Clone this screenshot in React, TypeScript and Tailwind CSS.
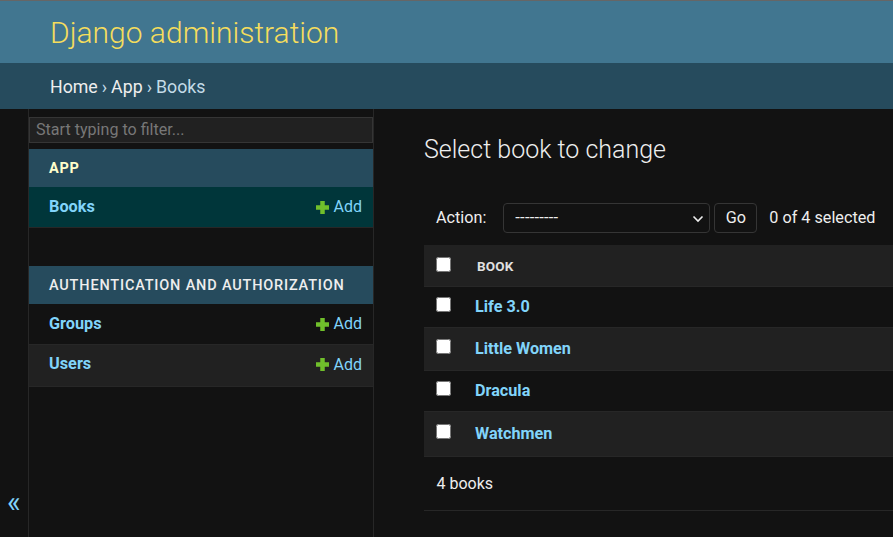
const font = { fontFamily: "Roboto, 'Liberation Sans', sans-serif" };

function PlusIcon() {
  return (
    <svg width="13" height="13" viewBox="0 0 13 13" className="mr-[5px] -ml-px">
      <path d="M4.25 0h4.5v4.25H13v4.5H8.75V13h-4.5V8.75H0v-4.5h4.25z" fill="#70bf2b" />
    </svg>
  );
}

function ModelRow({ name, rowClass }: { name: string; rowClass: string }) {
  return (
    <div className={`flex items-center justify-between border-b border-[#272727] pl-5 pr-[11px] ${rowClass}`}>
      <a className="text-[16.3px] font-bold text-[#81d4fa]">{name}</a>
      <a className="flex items-center text-[16px] text-[#81d4fa]">
        <PlusIcon />
        Add
      </a>
    </div>
  );
}

function BookRow({ title, rowClass, checkClass, textClass }: { title: string; rowClass: string; checkClass: string; textClass: string }) {
  return (
    <div className={`flex border-b border-[#272727] ${rowClass}`}>
      <input type="checkbox" className={`ml-[12px] h-[15px] w-[15px] ${checkClass}`} />
      <a className={`ml-[24px] text-[16.2px] leading-[24px] font-bold text-[#81d4fa] ${textClass}`}>{title}</a>
    </div>
  );
}

export default function App() {
  return (
    <div style={font} className="flex h-[537px] w-[893px] flex-col overflow-hidden bg-[#121212] text-[#eeeeee]">
      <header className="flex h-[63px] shrink-0 items-center border-t border-[#666666] bg-[#417690] pl-[50px]">
        <h1 className="text-[30px] font-light text-[#f5dd5d]">Django administration</h1>
      </header>
      <nav className="flex h-[46px] shrink-0 items-center bg-[#264b5d] pt-[2px] pl-[50px] text-[17.75px] text-[#c4dce8]">
        <a className="text-[#eeeeee]">Home</a>
        <span className="mx-[4px] text-[#c4dce8]">›</span>
        <a className="text-[#eeeeee]">App</a>
        <span className="mx-[4px] text-[#c4dce8]">›</span>
        <span>Books</span>
      </nav>
      <div className="flex min-h-0 flex-1">
        <div className="flex w-[28px] shrink-0 flex-col justify-end pb-[21px] pl-[7px]">
          <span className="text-[29px] leading-[28px] text-[#81d4fa]">«</span>
        </div>
        <aside className="flex w-[346px] shrink-0 flex-col border-x border-[#272727] pt-2">
          <input
            placeholder="Start typing to filter..."
            className="h-[26px] w-full border border-[#353535] bg-[#212121] pr-[7px] pb-[2px] pl-[6px] text-[16.1px] outline-none placeholder:text-[#777777]"
          />
          <div className="mt-[6px] flex h-[38px] items-center bg-[#264b5d] pt-[2px] pl-5 text-[14.5px] font-bold tracking-[0.7px] text-[#ffffcc]">
            APP
          </div>
          <ModelRow name="Books" rowClass="h-[41px] bg-[#00363a]" />
          <div className="mt-[38px] flex h-[38px] items-center bg-[#264b5d] pt-[2px] pl-5 text-[14.5px] font-medium tracking-[0.82px] text-[#eeeeee]">
            AUTHENTICATION AND AUTHORIZATION
          </div>
          <ModelRow name="Groups" rowClass="h-[41px]" />
          <ModelRow name="Users" rowClass="h-[42px] bg-[#212121] pb-[2px]" />
        </aside>
        <main className="min-w-0 flex-1 pl-[50px]">
          <h2 className="mt-[25px] text-[25px] leading-[32px] font-light text-[#eeeeee]">Select book to change</h2>
          <div className="mt-[37px] flex h-[30px] items-center pl-[12px] text-[16.2px]">
            <span>Action:</span>
            <div className="relative ml-[17px] h-[30px] w-[207px]">
              <select className="h-full w-full appearance-none rounded-[4px] border border-[#353535] bg-[#121212] pl-[11px] text-[16.5px] tracking-[0.2px]">
                <option>---------</option>
              </select>
              <svg width="12" height="8" viewBox="0 0 12 8" className="pointer-events-none absolute top-[12px] right-[6px]">
                <path d="M1.5 1.5 6 6l4.5-4.5" fill="none" stroke="#eeeeee" strokeWidth="1.6" />
              </svg>
            </div>
            <button className="ml-1 h-[30px] w-[43px] rounded-[4px] border border-[#353535] text-[16.2px]">Go</button>
            <span className="ml-[12px]">0 of 4 selected</span>
          </div>
          <div className="mt-3 w-[469px]">
            <div className="flex h-[42px] border-b border-[#272727] bg-[#212121]">
              <input type="checkbox" className="mt-3 ml-[12px] h-[15px] w-[15px]" />
              <span className="mt-[13px] ml-[26px] text-[13.5px] leading-[16px] font-bold tracking-[0.2px] text-[#e0e0e0]">BOOK</span>
            </div>
            <BookRow title="Life 3.0" rowClass="h-[41px]" checkClass="mt-[10px]" textClass="pt-[8px]" />
            <BookRow title="Little Women" rowClass="h-[43px] bg-[#212121]" checkClass="mt-[11px]" textClass="pt-[9px]" />
            <BookRow title="Dracula" rowClass="h-[41px]" checkClass="mt-[10px]" textClass="pt-[8px]" />
            <BookRow title="Watchmen" rowClass="h-[45px] bg-[#212121]" checkClass="mt-[12px]" textClass="pt-[10px]" />
            <div className="flex h-[54px] items-center border-b border-[#272727] pl-[12.5px] text-[16px]">4 books</div>
          </div>
        </main>
      </div>
    </div>
  );
}
